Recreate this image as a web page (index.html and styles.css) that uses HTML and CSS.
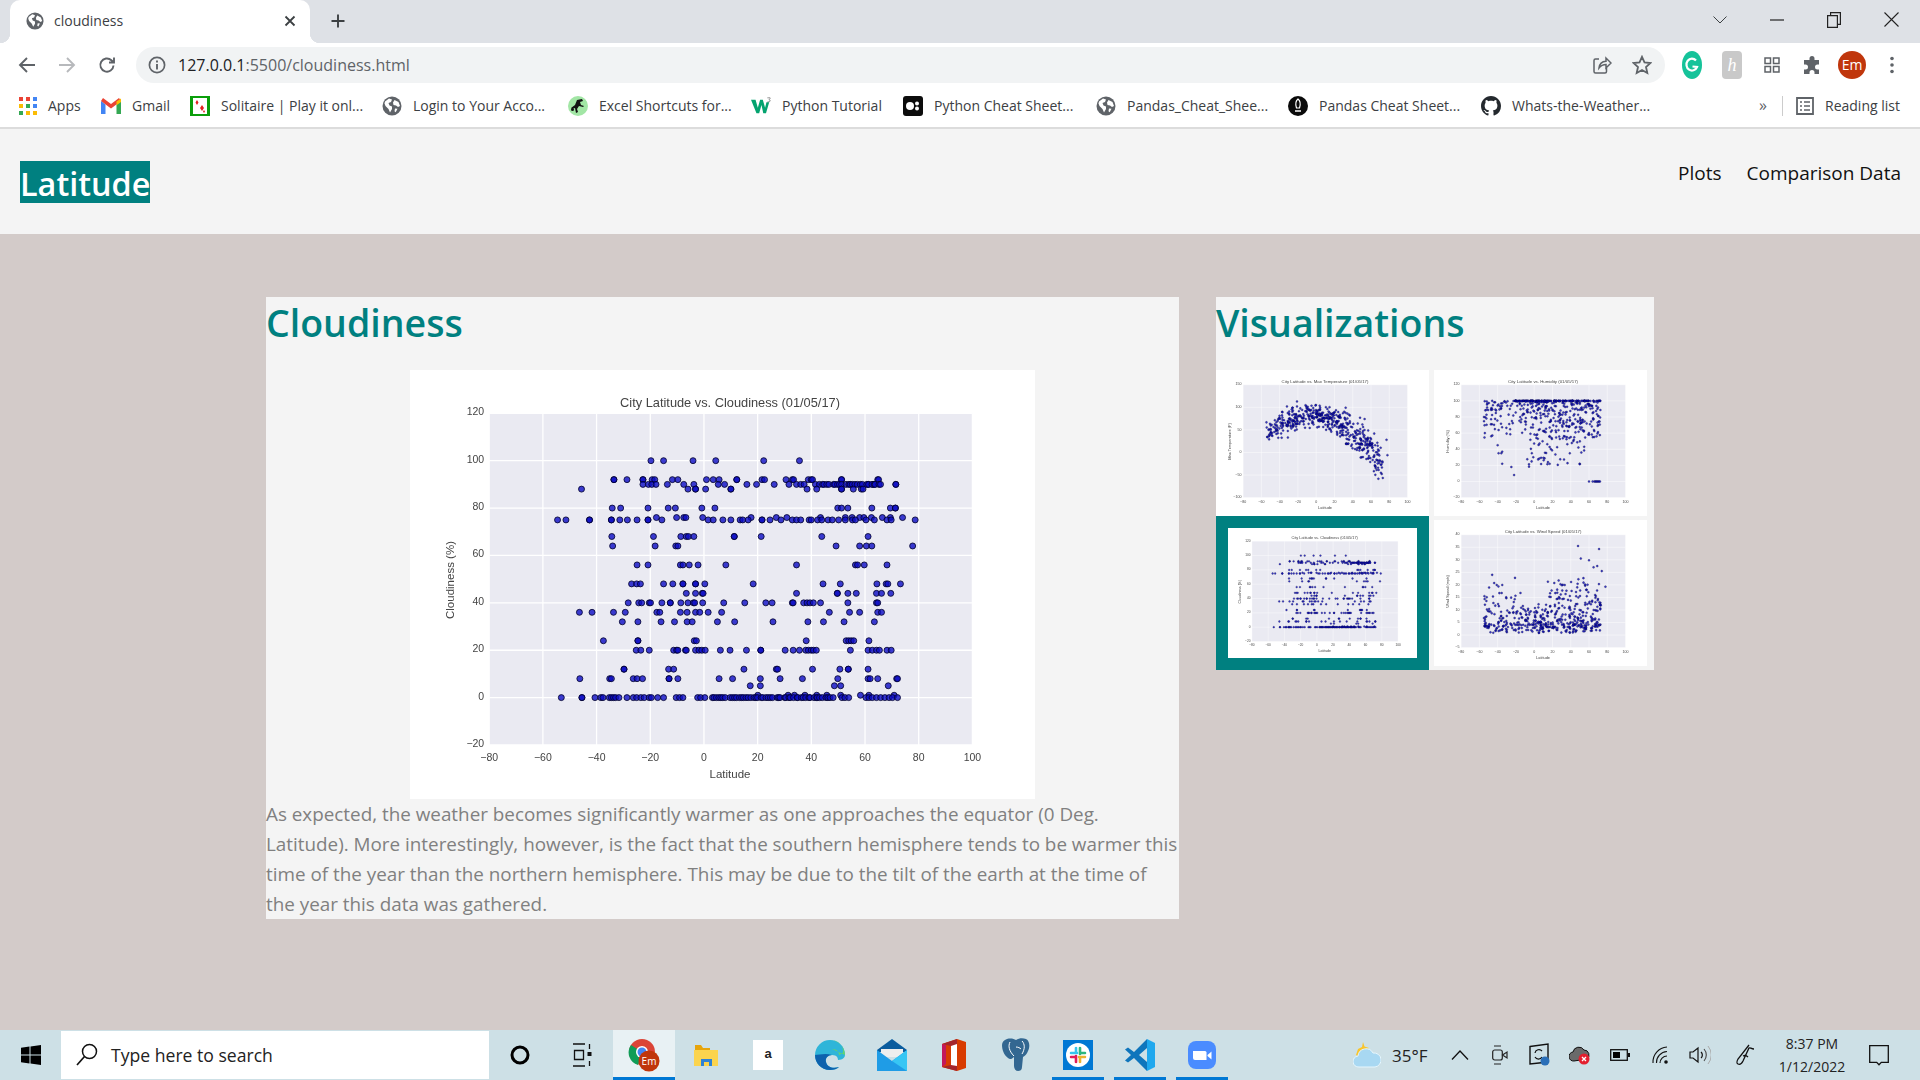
FILE: index.html
```html
<!DOCTYPE html>
<html>
<head>
<meta charset="utf-8" />
<title>cloudiness</title>
<link rel="stylesheet" href="styles.css">
</head>
<body>

<svg class="defs" width="0" height="0">
	<symbol id="globe" viewBox="0 0 20 20">
		<circle cx="10" cy="10" r="9.5" fill="#5f6368"/>
		<path d="M3 5.5 7 2.5 10 3.5 9 6 6.5 7 7.5 9.5 10 10.5 10 13 8 16.5 6.5 13 3.5 10 2.5 7.5zM12.5 4l4 2 1.5 4-2 1-2-1.5-2.5-.5-.5-2.5zM13 12.5l2.5.3-1.8 3.4-1.2-1z" fill="#fff"/>
	</symbol>
</svg>

<div id="browser">
	<div id="tabstrip">
		<div class="tab">
			<svg class="tab-icon"><use href="#globe"/></svg>
			<span class="tab-title">cloudiness</span>
			<svg class="tab-close" viewBox="0 0 12 12"><path d="M1.5 1.5l9 9M10.5 1.5l-9 9" stroke="#3c4043" stroke-width="1.8"/></svg>
		</div>
		<svg class="new-tab" viewBox="0 0 16 16"><path d="M8 1.5v13M1.5 8h13" stroke="#3c4043" stroke-width="1.9"/></svg>
		<div class="win-btns">
			<span class="win-btn"><svg width="14" height="8" viewBox="0 0 14 8"><path d="M.5.5 7 7 13.5.5" fill="none" stroke="#3c4043"/></svg></span>
			<span class="win-btn"><svg width="14" height="2" viewBox="0 0 14 2"><path d="M0 1h14" stroke="#222" stroke-width="1.2"/></svg></span>
			<span class="win-btn"><svg width="14" height="16" viewBox="0 0 14 16"><path d="M.6 3.6h9.800v11.800H.6zM3.600 3.400V.6h9.800v11.800h-2.800" fill="none" stroke="#222" stroke-width="1.2"/></svg></span>
			<span class="win-btn"><svg width="15" height="15" viewBox="0 0 15 15"><path d="M.5.5l14 14M14.500.5l-14 14" stroke="#222" stroke-width="1.1"/></svg></span>
		</div>
	</div>

	<div id="toolbar">
		<span class="tool"><svg width="18" height="18" viewBox="0 0 18 18"><path d="M17 9H2M9 2 2 9l7 7" fill="none" stroke="#5f6368" stroke-width="1.9"/></svg></span>
		<span class="tool"><svg width="18" height="18" viewBox="0 0 18 18"><path d="M1 9h15M9 2l7 7-7 7" fill="none" stroke="#b7b9bc" stroke-width="1.9"/></svg></span>
		<span class="tool"><svg width="18" height="18" viewBox="0 0 18 18"><path d="M15.500 9.500A6.600 6.600 0 1 1 13.400 4.200L16 6.500M16 1.500v5h-5" fill="none" stroke="#5f6368" stroke-width="1.9"/></svg></span>
		<div id="omnibox">
			<svg class="info" viewBox="0 0 18 18"><circle cx="9" cy="9" r="7.6" fill="none" stroke="#5f6368" stroke-width="1.7"/><path d="M9 8v5.500M9 4.500v2" stroke="#5f6368" stroke-width="1.9"/></svg>
			<span class="url">127.0.0.1<span class="url-path">:5500/cloudiness.html</span></span>
			<span class="omni-tool"><svg width="20" height="20" viewBox="0 0 20 20"><path d="M7 4H3.500A1.500 1.500 0 0 0 2 5.500v11A1.500 1.500 0 0 0 3.500 18h9.500a1.500 1.500 0 0 0 1.500-1.500V13" fill="none" stroke="#5f6368" stroke-width="1.5"/><path d="M7 13c.5-4 3-6.500 7-6.700V3l5 5-5 5V9.600c-3 0-5 1-7 3.400z" fill="none" stroke="#5f6368" stroke-width="1.5"/></svg></span>
			<span class="omni-tool"><svg width="20" height="20" viewBox="0 0 20 20"><path d="M10 1.800l2.500 5.600 6 .6-4.500 4 1.300 6L10 15l-5.300 3 1.300-6-4.500-4 6-.6z" fill="none" stroke="#5f6368" stroke-width="1.8"/></svg></span>
		</div>
		<div class="ext-tools">
			<span class="ext"><svg width="20" height="28" viewBox="0 0 20 28"><ellipse cx="10" cy="14" rx="10" ry="14" fill="#15c39a"/><path d="M14 9.500a5.500 6 0 1 0 1 6.500l-4.500-.5" fill="none" stroke="#fff" stroke-width="2.2"/></svg></span>
			<span class="ext"><span class="honey">h</span></span>
			<span class="ext"><svg width="16" height="16" viewBox="0 0 16 16"><path d="M1 1h5.500v5.500H1zM9.500 1H15v5.500H9.500zM1 9.500h5.500V15H1zM9.500 9.500H15V15H9.500z" fill="none" stroke="#5f6368" stroke-width="1.5"/></svg></span>
			<span class="ext"><svg width="20" height="20" viewBox="0 0 20 20"><path d="M7.500 3.500a2.500 2.500 0 0 1 5 0V5H17v4.500h-1.500a2.500 2.500 0 0 0 0 5H17V19h-4.500v-1.500a2.500 2.500 0 0 0-5 0V19H2v-4.500h1.500a2.500 2.500 0 0 0 0-5H2V5h5.500z" fill="#5f6368"/></svg></span>
			<span class="ext"><span class="avatar">Em</span></span>
			<span class="ext"><svg width="4" height="18" viewBox="0 0 4 18"><circle cx="2" cy="2.500" r="1.800" fill="#5f6368"/><circle cx="2" cy="9" r="1.800" fill="#5f6368"/><circle cx="2" cy="15.500" r="1.800" fill="#5f6368"/></svg></span>
		</div>
	</div>

	<div id="bookmarks">
		<a class="bm bm-apps"><svg viewBox="0 0 18 18"><path d="M0 0h4v4H0z" fill="#ea4335"/><path d="M7 0h4v4H7z" fill="#ea4335"/><path d="M14 0h4v4h-4z" fill="#4285f4"/><path d="M0 7h4v4H0z" fill="#fbbc04"/><path d="M7 7h4v4H7z" fill="#34a853"/><path d="M14 7h4v4h-4z" fill="#4285f4"/><path d="M0 14h4v4H0z" fill="#34a853"/><path d="M7 14h4v4H7z" fill="#fbbc04"/><path d="M14 14h4v4h-4z" fill="#fbbc04"/></svg>Apps</a>
		<a class="bm bm-gmail"><svg viewBox="0 0 20 16"><path d="M0 3v13h4.500V6.500z" fill="#4285f4"/><path d="M20 3v13h-4.500V6.500z" fill="#34a853"/><path d="M0 3l10 7.500L20 3l-2-3-8 6-8-6z" fill="#ea4335"/><path d="M15.500 3.500 20 .5V4l-4.500 3.200z" fill="#fbbc04"/></svg>Gmail</a>
		<a class="bm bm-sol"><svg viewBox="0 0 20 20"><path d="M0 0h20v20H0z" fill="#0b9e0b"/><path d="M3 2h14v16H3z" fill="#fff"/><path d="M7 4l1.500 2.500L7 9 5.500 6.500zM12 9l2 3-2 3-2-3zM14 14l1 1.500-1 1.500-1-1.500z" fill="#e32020"/></svg>Solitaire | Play it onl...</a>
		<a class="bm bm-login"><svg><use href="#globe"/></svg>Login to Your Acco...</a>
		<a class="bm bm-excel"><svg viewBox="0 0 20 20"><circle cx="10" cy="10" r="10" fill="#a2e6a5"/><path d="M9 4l5-1 1 2-3 1 1 3 3 1-1 1-4-1-2 3 1 3-2 1-1-5-3 1-1-1 4-3z" fill="#111"/><circle cx="4.500" cy="13.500" r="1.500" fill="#111"/></svg>Excel Shortcuts for...</a>
		<a class="bm bm-w3"><svg viewBox="0 0 22 20"><path d="M0 3h5l2.500 9L10 3h3l2.500 9L17 6h3l-3.500 12h-3L11.500 9 9 18H6z" fill="#04a36f"/><path d="M18 1h3v.8l-1.200 1.200q1.300.2 1.300 1.300 0 1.500-3 1.200" fill="none" stroke="#555" stroke-width=".7"/></svg>Python Tutorial</a>
		<a class="bm bm-pyc"><svg viewBox="0 0 20 20"><rect width="20" height="20" rx="3" fill="#0c0c0c"/><circle cx="7" cy="10" r="4" fill="#fff"/><circle cx="14" cy="7.500" r="2" fill="#fff"/><circle cx="14" cy="12.500" r="2" fill="#fff"/></svg>Python Cheat Sheet...</a>
		<a class="bm bm-pd1"><svg><use href="#globe"/></svg>Pandas_Cheat_Shee...</a>
		<a class="bm bm-pd2"><svg viewBox="0 0 20 20"><circle cx="10" cy="10" r="10" fill="#0a0a0a"/><path d="M10 3c2.500 2 2.500 6 1.500 9h-3C7.500 9 7.500 5 10 3z" fill="none" stroke="#fff" stroke-width="1.2"/><path d="M7 15h6" stroke="#fff" stroke-width="1.5"/></svg>Pandas Cheat Sheet...</a>
		<a class="bm bm-gh"><svg viewBox="0 0 16 16"><path d="M8 0C3.580 0 0 3.580 0 8c0 3.540 2.290 6.530 5.470 7.590.4.070.55-.17.55-.38 0-.19-.01-.82-.01-1.490-2.010.37-2.530-.49-2.690-.94-.09-.23-.48-.94-.82-1.130-.28-.15-.68-.52-.01-.53.63-.01 1.080.58 1.230.82.72 1.210 1.870.87 2.330.66.07-.52.28-.87.51-1.070-1.780-.2-3.640-.89-3.640-3.950 0-.87.31-1.590.82-2.150-.08-.2-.36-1.020.08-2.120 0 0 .67-.21 2.200.82.64-.18 1.320-.27 2-.27.68 0 1.360.09 2 .27 1.530-1.040 2.200-.82 2.200-.82.44 1.100.16 1.920.08 2.120.51.56.82 1.270.82 2.150 0 3.070-1.870 3.750-3.650 3.950.29.25.54.73.54 1.480 0 1.070-.01 1.930-.01 2.200 0 .21.15.46.55.38A8.013 8.013 0 0 0 16 8c0-4.420-3.580-8-8-8z" fill="#24292e"/></svg>Whats-the-Weather...</a>
		<span class="bm-more">»</span>
		<a class="bm bm-read"><svg viewBox="0 0 18 18"><path d="M1 1h16v16H1z" fill="none" stroke="#5f6368" stroke-width="1.8"/><path d="M4 5h2M8 5h6M4 9h2M8 9h6M4 13h2M8 13h6" stroke="#5f6368" stroke-width="1.5"/></svg>Reading list</a>
	</div>
</div>

<div id="nav">
	<a class="brand">Latitude</a>
	<ul class="nav-links">
		<li><a>Plots</a></li>
		<li><a>Comparison Data</a></li>
	</ul>
</div>

<div id="content">
	<div class="card card-main">
		<h1>Cloudiness</h1>
		<div class="plot-main" data-plot="cloud"></div>
		<p>As expected, the weather becomes significantly warmer as one approaches the equator (0 Deg. Latitude). More interestingly, however, is the fact that the southern hemisphere tends to be warmer this time of the year than the northern hemisphere. This may be due to the tilt of the earth at the time of the year this data was gathered.</p>
	</div>
	<div class="card card-side">
		<h1>Visualizations</h1>
		<div class="thumbs">
			<a class="thumb" data-plot="temp"></a>
			<a class="thumb" data-plot="hum"></a>
			<a class="thumb thumb-on" data-plot="cloud"></a>
			<a class="thumb" data-plot="wind"></a>
		</div>
	</div>
</div>

<div id="taskbar">
	<span class="start"><svg width="20" height="20" viewBox="0 0 20 20"><path d="M0 2.800 8.500 1.600v8H0zM9.500 1.500 20 0v9.600H9.500zM0 10.500h8.500v8L0 17.200zM9.500 10.500H20V20L9.500 18.500z" fill="#000"/></svg></span>
	<div class="search">
		<svg width="22" height="24" viewBox="0 0 22 24"><circle cx="13.500" cy="8.500" r="7" fill="none" stroke="#111" stroke-width="1.5"/><path d="M8.500 13.500 1 22" stroke="#111" stroke-width="1.7"/></svg>
		<span>Type here to search</span>
	</div>
	<div class="task-icons">
		<span class="ti"><svg width="20" height="20" viewBox="0 0 20 20"><circle cx="10" cy="10" r="8" fill="none" stroke="#000" stroke-width="3"/></svg></span>
		<span class="ti"><svg width="20" height="24" viewBox="0 0 20 24"><path d="M1 1h12M1 23h12M2.500 7.500h9v9h-9zM17.500 1v5M17.500 18v5" fill="none" stroke="#111" stroke-width="1.3"/><path d="M15.500 9h4v4h-4z" fill="#111"/></svg></span>
		<span class="ti ti-active"><svg width="32" height="34" viewBox="0 0 32 34"><circle cx="14" cy="14" r="13" fill="#db4437"/><path d="M14 14 3 7a13 13 0 0 0 7 20z" fill="#0f9d58"/><path d="M14 14h13a13 13 0 0 1-4 9z" fill="#f4b400"/><circle cx="14" cy="14" r="6" fill="#fff"/><circle cx="14" cy="14" r="4.500" fill="#4285f4"/><circle cx="21" cy="23" r="10.500" fill="#c0360c"/><text class="badge-em" x="21" y="27">Em</text></svg></span>
		<span class="ti"><svg width="24" height="26" viewBox="0 0 24 26"><path d="M1 6V3h6l2 3h7v3H1z" fill="#e7a50c"/><path d="M0 8h24v16H0z" fill="#fbd44e"/><path d="M7 24v-7h11v7z" fill="#2f82d6"/><path d="M10 24v-4h5v4z" fill="#fbd44e"/></svg></span>
		<span class="ti"><span class="amazon">a</span></span>
		<span class="ti"><svg width="30" height="30" viewBox="0 0 30 30"><path d="M15 0a15 15 0 0 0-15 15c0 8 6 15 15 15 4 0 7-1 9-3-6 2-12 0-13-5-1-4 2-7 6-7 5 0 6 3 6 5 5 0 7-3 7-5C30 6 23 0 15 0z" fill="#2fb5d9"/><path d="M30 15c0-8-7-15-15-15 6 0 12 3 13 10 .5 4-2 4-4 5 0-3-2-6-7-6z" fill="#62d46f"/><path d="M0 15c0 8 6 15 15 15 4 0 7-1 9-3-6 2-12 0-13-5-1-4 2-7 6-7-6-2-14 0-17 0z" fill="#0d62ad"/></svg></span>
		<span class="ti"><svg width="30" height="32" viewBox="0 0 30 32"><path d="M0 11 15 0l15 11v2H0z" fill="#0a5c9e"/><path d="M4 10h22v8H4z" fill="#eee"/><path d="M0 11l15 11L30 11v21H0z" fill="#1f9ce6"/><path d="M15 22l15-11v21z" fill="#37c6f4"/></svg></span>
		<span class="ti"><svg width="24" height="32" viewBox="0 0 24 32"><path d="M15 0l9 3v26l-9 3-15-4V5z" fill="#d83b01"/><path d="M15 0v32L0 28l9-2V7L0 5z" fill="#a4262c"/><path d="M9 7l6-2v22l-6-1z" fill="#fff"/><path d="M0 5l4 1v19l-4 3z" fill="#c2185b"/></svg></span>
		<span class="ti"><svg width="28" height="34" viewBox="0 0 28 34"><path d="M5 1c4-1 7 0 9 1 3-2 7-2 10-1 4 2 4 8 2 12-1 3-3 5-5 6l-1 10c0 3-2 4-4 4s-4-2-4-5v-9c-2 2-4 3-6 1C2 17 0 12 0 7c0-3 2-5 5-6z" fill="#336791"/><path d="M8 4c-2 4-1 9 4 14M20 3c3 3 3 8 0 13M14 9c2 0 4 1 5 2" fill="none" stroke="#fff" stroke-width="1"/></svg></span>
		<span class="ti ti-running"><span class="slack"><svg width="18" height="18" viewBox="0 0 18 18"><path d="M2 7h6" stroke="#36c5f0" stroke-width="2.6" stroke-linecap="round"/><path d="M7 2v4" stroke="#36c5f0" stroke-width="2.6" stroke-linecap="round"/><path d="M11 2v6" stroke="#2eb67d" stroke-width="2.6" stroke-linecap="round"/><path d="M12 7h4" stroke="#2eb67d" stroke-width="2.6" stroke-linecap="round"/><path d="M10 11h6" stroke="#ecb22e" stroke-width="2.6" stroke-linecap="round"/><path d="M11 12v4" stroke="#ecb22e" stroke-width="2.6" stroke-linecap="round"/><path d="M7 10v6" stroke="#e01e5a" stroke-width="2.6" stroke-linecap="round"/><path d="M2 11h4" stroke="#e01e5a" stroke-width="2.6" stroke-linecap="round"/></svg></span></span>
		<span class="ti ti-running"><svg width="30" height="32" viewBox="0 0 30 32"><path d="M22 0l8 4v24l-8 4z" fill="#1fa8ee"/><path d="M22 0 9 13 3 8.500 0 10.500 6 16l-6 5.500 3 2L9 19l13 13V23l-8-7 8-7z" fill="#0f75bc"/></svg></span>
		<span class="ti ti-running"><svg width="28" height="28" viewBox="0 0 28 28"><rect width="28" height="28" rx="8" fill="#4a8cff"/><path d="M5 10h12a1.500 1.500 0 0 1 1.500 1.500V19H7a2 2 0 0 1-2-2z" fill="#fff"/><path d="M19.500 14l4-3.500v8L19.500 15z" fill="#fff"/></svg></span>
	</div>
	<div class="tray">
		<span class="weather"><svg width="28" height="26" viewBox="0 0 28 26"><path d="M10 0l1.500 4.500L16 6l-4 3-3 8-6-4 2-6 4-2z" fill="#f9c52b"/><path d="M6 25a5.500 5.500 0 0 1-1-11 8 8 0 0 1 15-3 7 7 0 0 1 2 14z" fill="#a8d8f2" stroke="#e6f6fd"/></svg><span>35°F</span></span>
		<span class="tr"><svg width="18" height="10" viewBox="0 0 18 10"><path d="M1 9.500 9 1l8 8.500" fill="none" stroke="#111" stroke-width="1.3"/></svg></span>
		<span class="tr"><svg width="16" height="20" viewBox="0 0 16 20"><path d="M2 1h7M2 19h7" stroke="#222"/><rect x=".7" y="5" width="9.600" height="10" rx="2" fill="none" stroke="#222" stroke-width="1.2"/><path d="M10.500 10l4.500-3v6z" fill="none" stroke="#222" stroke-width="1.2"/></svg></span>
		<span class="tr"><svg width="22" height="24" viewBox="0 0 22 24"><path d="M1 3.500 19 1v18L1 21z" fill="none" stroke="#111" stroke-width="1.4"/><path d="M6 10a4 4 0 0 1 7-2M13 14a4 4 0 0 1-7 0" fill="none" stroke="#111" stroke-width="1.2"/><circle cx="16" cy="18" r="4.500" fill="#2a6fb8"/></svg></span>
		<span class="tr"><svg width="22" height="20" viewBox="0 0 22 20"><path d="M5 16a4.500 4.500 0 0 1-1-9 6 6 0 0 1 11-2 5 5 0 0 1 3 9z" fill="#6a6a6a" stroke="#111"/><circle cx="15" cy="14" r="5.500" fill="#e3202f"/><path d="M13 12l4 4M17 12l-4 4" stroke="#fff" stroke-width="1.3"/></svg></span>
		<span class="tr"><svg width="20" height="12" viewBox="0 0 20 12"><rect x=".7" y=".7" width="16.600" height="10.600" fill="none" stroke="#111" stroke-width="1.3"/><path d="M3 3h7v6H3z" fill="#000"/><path d="M18 4h2v4h-2z" fill="#111"/></svg></span>
		<span class="tr"><svg width="16" height="18" viewBox="0 0 16 18"><path d="M1 17A15 15 0 0 1 15 1M4.500 17A11 11 0 0 1 15 5.500M8 17a7 7 0 0 1 7-7" fill="none" stroke="#111" stroke-width="1.1"/><circle cx="14" cy="16" r="1.800" fill="#111"/></svg></span>
		<span class="tr"><svg width="22" height="20" viewBox="0 0 22 20"><path d="M1 7h3l5-4v14l-5-4H1z" fill="none" stroke="#111" stroke-width="1.2"/><path d="M12 7a4 4 0 0 1 0 6" fill="none" stroke="#111" stroke-width="1.2"/><path d="M15 4a9 9 0 0 1 0 12" fill="none" stroke="#444" stroke-width="1.1"/><path d="M19 1a14 14 0 0 1 0 18" fill="none" stroke="#aaa" stroke-width="1"/></svg></span>
		<span class="tr tr-pen"><svg width="20" height="22" viewBox="0 0 20 22"><path d="M14 1 3 15c-1 2-2 4 0 5 2 1 4-1 5-3l6-13c1-1 2 1 5 1M8 12c2-1 4 0 5 1" fill="none" stroke="#111" stroke-width="1.3"/></svg></span>
		<span class="clock"><span>8:37 PM</span><span>1/12/2022</span></span>
		<span class="tr tr-note"><svg width="20" height="21" viewBox="0 0 20 21"><path d="M.7.7h18.600v16.600h-7l-2.300 2.500-2.300-2.500h-7z" fill="none" stroke="#111" stroke-width="1.3"/></svg></span>
	</div>
</div>

<script src="plots.js"></script>
</body>
</html>
```

FILE: styles.css
```css
html * { margin:0; padding:0; box-sizing:border-box; }
html, body { height:100%; }
body {
	width:1920px;
	height:1080px;
	overflow:hidden;
	display:flex;
	flex-direction:column;
	background:#d3cbc9;
	font-family:"Open Sans", "Noto Sans", sans-serif;
}
.defs { position:absolute; }
svg { display:block; flex:none; }

/* browser chrome */
#tabstrip {
	height:43px;
	background:#dee1e6;
	display:flex;
	align-items:center;
}
.tab {
	width:300px;
	height:43px;
	margin-left:10px;
	padding-bottom:2px;
	background:#fff;
	border-radius:10px 10px 0 0;
	display:flex;
	align-items:center;
	position:relative;
	font-size:14px;
	color:#3c4043;
}
.tab::before, .tab::after {
	content:"";
	position:absolute;
	bottom:0;
	width:10px;
	height:10px;
}
.tab::before { left:-10px; background:radial-gradient(circle at 0 0, #dee1e6 10px, #fff 10.5px); }
.tab::after { right:-10px; background:radial-gradient(circle at 100% 0, #dee1e6 10px, #fff 10.5px); }
.tab-icon { width:18px; height:18px; margin-left:16px; }
.tab-title { margin-left:10px; flex:1; }
.tab-close { width:12px; height:12px; margin-right:14px; }
.new-tab { width:16px; height:16px; margin-left:20px; margin-bottom:2px; }
.win-btns { margin-left:auto; margin-bottom:4px; display:flex; }
.win-btn {
	width:57px;
	height:38px;
	display:flex;
	align-items:center;
	justify-content:center;
}
.win-btn:last-child { width:58px; }

#toolbar {
	height:44px;
	background:#fff;
	display:flex;
	align-items:center;
	padding-left:7px;
}
.tool {
	width:40px;
	height:36px;
	display:flex;
	align-items:center;
	justify-content:center;
}
#omnibox {
	flex:1;
	height:36px;
	margin-left:9px;
	margin-right:7px;
	background:#f1f3f4;
	border-radius:18px;
	display:flex;
	align-items:center;
	padding:0 3px 0 12px;
}
.info { width:18px; height:18px; }
.url { margin-left:12px; flex:1; font-size:16px; color:#202124; }
.url-path { color:#5f6368; }
.omni-tool {
	width:40px;
	height:36px;
	display:flex;
	align-items:center;
	justify-content:center;
}
.ext-tools { display:flex; width:240px; margin-right:8px; }
.ext {
	width:40px;
	height:36px;
	display:flex;
	align-items:center;
	justify-content:center;
}
.honey {
	width:20px;
	height:28px;
	border-radius:4px;
	background:#c9c9c9;
	color:#fff;
	font:italic 18px/28px "Liberation Serif", serif;
	text-align:center;
}
.avatar {
	width:28px;
	height:28px;
	border-radius:50%;
	background:#c0360c;
	color:#fff;
	font-size:14px;
	line-height:28px;
	text-align:center;
}

#bookmarks {
	height:42px;
	padding-bottom:3px;
	background:#fff;
	border-bottom:2px solid #dcdcdc;
	display:flex;
	align-items:center;
	padding-left:19px;
	font-size:14px;
	color:#3c4043;
}
.bm { display:flex; align-items:center; gap:11px; white-space:nowrap; }
.bm svg { width:20px; height:20px; }
.bm-apps { width:82px; }
.bm-apps svg { width:18px; height:18px; }
.bm-gmail { width:89px; }
.bm-sol { width:192px; }
.bm-login { width:186px; }
.bm-excel { width:183px; }
.bm-w3 { width:152px; }
.bm-pyc { width:193px; }
.bm-pd1 { width:192px; }
.bm-pd2 { width:193px; }
.bm-gh { width:278px; }
.bm-more {
	width:24px;
	font-size:16px;
	color:#5f6368;
	height:20px;
	line-height:18px;
	border-right:1px solid #ccc;
	margin-right:13px;
}
.bm-read svg { width:18px; height:18px; }

/* site nav */
#nav {
	height:105px;
	background:#f4f4f4;
	display:flex;
	align-items:center;
	padding:0 20px;
}
.brand {
	height:42px;
	background:#008080;
	color:#fff;
	font-size:32.4px;
	font-weight:600;
	line-height:44px;
}
.nav-links {
	margin-left:auto;
	display:flex;
	gap:25px;
	list-style:none;
	font-size:19px;
	color:#111;
	margin-top:-18px;
	margin-right:-1px;
}

/* page */
#content {
	flex:1;
	display:flex;
	align-items:flex-start;
	gap:37px;
	padding:63px 0 0 266px;
}
.card { background:#f4f4f4; }
.card-main { width:913px; height:622px; }
.card-side { width:438px; height:373px; }
h1 {
	height:73px;
	font-size:37.5px;
	line-height:51px;
	font-weight:600;
	color:#008080;
}
.plot-main { width:625px; height:429px; margin:0 auto; background:#fff; }
.plot-main svg { width:625px; height:429px; filter:blur(.4px); }
p {
	font-size:18.85px;
	line-height:30px;
	color:#808080;
}
.thumbs {
	display:grid;
	grid-template-columns:213px 213px;
	grid-template-rows:146px 154px;
	column-gap:5px;
	align-items:center;
}
.thumb { display:block; background:#fff; width:213px; height:146px; }
.thumb svg { width:100%; height:100%; filter:blur(.6px); }
.thumb-on {
	height:154px;
	padding:12px;
	background:#008080;
}
.thumb-on svg { background:#fff; }

/* taskbar */
#taskbar {
	height:50px;
	background:#cde0e6;
	display:flex;
	align-items:center;
}
.start {
	width:61px;
	display:flex;
	justify-content:center;
}
.search {
	width:428px;
	height:48px;
	background:#fff;
	display:flex;
	align-items:center;
	gap:13px;
	padding-left:15px;
	font-size:17.6px;
	color:#222;
}
.task-icons { display:flex; }
.ti {
	width:62px;
	height:50px;
	display:flex;
	align-items:center;
	justify-content:center;
	position:relative;
}
.ti-active { background:#e8f1f4; }
.ti-active::after, .ti-running::after {
	content:"";
	position:absolute;
	bottom:0;
	height:3px;
	background:#0078d4;
}
.ti-active::after { left:0; right:0; }
.ti-running::after { left:5px; right:5px; }
.badge-em { font-size:10px; fill:#fff; text-anchor:middle; }
.amazon {
	width:30px;
	height:30px;
	background:#fff;
	color:#222;
	font:bold 13px/28px "Liberation Sans", sans-serif;
	text-align:center;
}
.slack {
	width:30px;
	height:30px;
	background:#0078d4;
	display:flex;
	align-items:center;
	justify-content:center;
}
.slack svg {
	width:24px;
	height:24px;
	padding:3px;
	background:#fff;
	border-radius:50%;
}
.tray {
	flex:1;
	display:flex;
	align-items:center;
	padding-left:120px;
	font-size:17px;
	color:#222;
}
.weather { display:flex; align-items:center; gap:11px; width:87px; }
.tr {
	width:40px;
	display:flex;
	justify-content:center;
}
.tr-pen { width:50px; }
.clock {
	width:84px;
	display:flex;
	flex-direction:column;
	align-items:center;
	font-size:14px;
	line-height:23px;
	color:#222;
}
.tr-note { width:50px; }
```

FILE: plots.js
```js
// scatter charts for the main picture and the thumbnails
var W = 625, H = 429;
var L = 79.2, R = 562.4, T = 43.3, B = 375;
var SVGNS = "http://www.w3.org/2000/svg";

// small seeded random so the thumbnails stay the same on each load
var seed = 42;
function rnd(){
	seed = (seed * 16807) % 2147483647;
	return seed / 2147483647;
}

// cloudiness rows were read off the picture, as px from the chart's x scale
function lat(px){ return (px - 720) / 6.38; }
function dense(a, b, n){
	var out = [];
	for(var i = 0; i < n; i++){
		out.push(a + (b - a) * (i + rnd()) / n);
	}
	return out;
}
var rows = [
	[100, [594,624,694,748,862,947]],
	[92, [506,506,537,575,575,597,603,645,658,726,742,756,798,798,858,864,915,930,933,968,975,978,1047,1047,1133,1135]],
	[90, [575,588,596,606,633,672,696,754,769,822,845,887,922,940,950,958,1110,1122,1176,1176].concat(dense(985,1145,26))],
	[88, [429,682,700,700,724,784,784,965,988,1047,1047,1075,1094,1098]],
	[80, [502,522,587,635,652,715,746,1038,1047,1062,1119,1163,1175,1175]],
	[76, [607,655,672,677,717,832,892,917,997,1056,1072,1090,1100,1118,1144,1163,1192]],
	[75, [372,392,448,448,500,500,520,538,561,587,587,620,730,742,765,784,806,812,825,858,858,877,903,930,940,950,970,975,990,1000,1015,1025,1040,1056,1073,1080,1105,1125,1155,1165,1222]],
	[68, [501,600,665,678,683,696,792,792,856,1000,1110]],
	[64, [503,604,653,658,1034,1090,1106,1119,1216]],
	[56, [561,587,664,670,685,706,772,940,1080,1085,1101,1155]],
	[48, [548,560,569,624,646,670,670,700,700,722,837,1003,1044,1131,1153,1157,1187]],
	[44, [678,700,716,718,940,1037,1037,1062,1082,1130,1142,1164]],
	[40, [540,565,572,590,593,620,640,640,665,682,695,698,717,767,817,867,882,930,932,957,965,972,980,997,1062,1130,1133]],
	[36, [424,454,505,533,608,615,664,680,700,710,730,762,1018,1066,1090,1133,1142]],
	[32, [526,563,618,650,680,692,752,793,884,967,1004,1053,1125]],
	[24, [481,563,563,697,702,963,1058,1064,1070,1076,1112]],
	[20, [559,570,590,648,655,658,676,678,700,708,715,723,759,782,821,855,855,913,932,947,962,968,975,980,987,1068,1110,1120,1130,1137,1155,1165]],
	[12, [530,530,636,648,815,892,895,978,1043,1063,1063,1110]],
	[8, [425,496,500,552,561,574,637,637,658,756,788,854,901,954,1038,1110,1115,1133,1178,1180]],
	[5, [830,854,1030,1045,1158]],
	[1, [848,920,935,960,988,1012,1045,1092,1112,1172]],
	[0, [381,430,430,461,475,480,495,500,505,510,518,537,552,560,570,578,590,595,610,624,654,662,670,705,712,722].concat(dense(735,1030,50), [1048,1055,1064,1105,1112,1120,1130,1140,1150,1160,1168,1180])]
];
var cloudPts = [];
rows.forEach(function(r){
	r[1].forEach(function(px){ cloudPts.push([lat(px), r[0]]); });
});

function randLat(){
	return rnd() < 0.68 ? rnd() * 73 : -55 + rnd() * 55;
}
function tempAt(x){
	var k = [[-55,40],[-40,60],[-20,78],[0,82],[20,72],[40,42],[60,12],[72,-30],[80,10]];
	for(var i = 1; i < k.length; i++){
		if(x <= k[i][0]){
			var t = (x - k[i-1][0]) / (k[i][0] - k[i-1][0]);
			return k[i-1][1] + (k[i][1] - k[i-1][1]) * t;
		}
	}
	return 0;
}
function tempPts(){
	var out = [], i, x;
	for(i = 0; i < 520; i++){
		x = randLat();
		out.push([x, tempAt(x) + (rnd() + rnd() - 1) * (x > 30 ? 48 : 30)]);
	}
	out.push([-21,113],[-32,102],[-26,99],[-21,102],[-37,89],[48,77],[53,74],[-31,33],[77,28],[78,-6]);
	return out;
}
function humPts(){
	var out = [], i, x;
	for(i = 0; i < 110; i++){ out.push([-22 + rnd() * 95, 100]); }
	for(i = 0; i < 360; i++){
		x = randLat();
		out.push([x, 100 - Math.pow(rnd(), 1.5) * 48]);
	}
	for(i = 0; i < 50; i++){ out.push([-10 + rnd() * 65, 18 + rnd() * 38]); }
	out.push([-46,100],[-47,90],[-55,80],[-54,60],[-47,56],[-40,45],[-22,8],[-35,22],[-25,18],[-39,35],[-36,35],[-35,37]);
	[60,64,66,67,68,69,70,71,72].forEach(function(v){ out.push([v,0]); });
	return out;
}
function windPts(){
	var out = [], i, x;
	for(i = 0; i < 480; i++){
		x = randLat();
		out.push([x, 0.8 + Math.pow(rnd(), 2.2) * (x < -15 ? 18 : x < 15 ? 10 : 19) + rnd() * 3.5]);
	}
	out.push([48,35.5],[71,34.3],[51,30.5],[60,29.8],[65,27],[69,27.5],[74,25.5],[-46,24],[-21,22.8],[15,21.3],[78,19.3],[-55,6.8],[-54,4.5],[-41,20]);
	return out;
}

function el(name, attrs, parent){
	var n = document.createElementNS(SVGNS, name);
	for(var k in attrs){ n.setAttribute(k, attrs[k]); }
	parent.appendChild(n);
	return n;
}
function label(parent, str, x, y, size, anchor, rotate){
	var t = el("text", {x:x, y:y, "font-size":size, "text-anchor":anchor, fill:"#444", "font-family":"Liberation Sans, sans-serif"}, parent);
	if(rotate){ t.setAttribute("transform", "rotate(-90 " + x + " " + y + ")"); }
	t.textContent = str;
}

function drawPlot(box, cfg){
	var svg = el("svg", {viewBox:"0 0 " + W + " " + H}, box);
	var sx = function(v){ return L + (v + 80) / 180 * (R - L); };
	var sy = function(v){ return B - (v - cfg.min) / (cfg.max - cfg.min) * (B - T); };
	el("rect", {x:L, y:T, width:R - L, height:B - T, fill:"#eaeaf2"}, svg);
	var v;
	for(v = -80; v <= 100; v += 20){
		el("line", {x1:sx(v), x2:sx(v), y1:T, y2:B, stroke:"#fff", "stroke-width":1.3}, svg);
		label(svg, String(v).replace("-", "\u2212"), sx(v), 391, 10.5, "middle");
	}
	for(v = cfg.min; v <= cfg.max; v += cfg.step){
		el("line", {x1:L, x2:R, y1:sy(v), y2:sy(v), stroke:"#fff", "stroke-width":1.3}, svg);
		label(svg, String(v).replace("-", "\u2212"), L - 5, sy(v) + 2, 10.5, "end");
	}
	label(svg, cfg.title, 320, 37, 12.8, "middle");
	label(svg, "Latitude", 320, 408, 11.5, "middle");
	label(svg, cfg.ylabel, 44, 210, 11.5, "middle", true);
	cfg.pts.forEach(function(p){
		el("circle", {cx:sx(p[0]), cy:sy(p[1]), r:3, fill:"#0c0cc4", "fill-opacity":0.8, stroke:"#00002a", "stroke-width":0.8}, svg);
	});
}

var plots = {
	cloud: {title:"City Latitude vs. Cloudiness (01/05/17)", ylabel:"Cloudiness (%)", min:-20, max:120, step:20, pts:cloudPts},
	temp: {title:"City Latitude vs. Max Temperature (01/05/17)", ylabel:"Max Temperature (F)", min:-100, max:150, step:50, pts:tempPts()},
	hum: {title:"City Latitude vs. Humidity (01/05/17)", ylabel:"Humidity (%)", min:-20, max:120, step:20, pts:humPts()},
	wind: {title:"City Latitude vs. Wind Speed (01/05/17)", ylabel:"Wind Speed (mph)", min:-5, max:40, step:5, pts:windPts()}
};
var boxes = document.querySelectorAll("[data-plot]");
for(var i = 0; i < boxes.length; i++){
	drawPlot(boxes[i], plots[boxes[i].getAttribute("data-plot")]);
}
```
